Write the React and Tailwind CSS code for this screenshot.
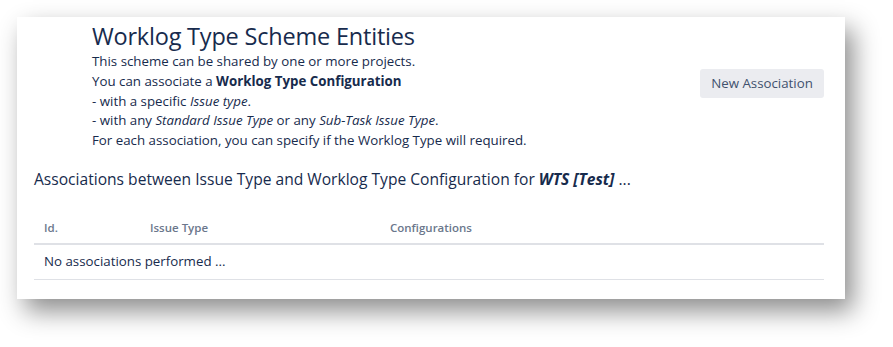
const font = { fontFamily: '"Open Sans", "Noto Sans", sans-serif' };

const App = () => {
  return (
    <div className="w-[893px] h-[347px] bg-white pl-[17px] pt-[17px] overflow-hidden" style={font}>
      <div className="w-[828px] h-[282px] bg-white shadow-[8px_12px_24px_rgba(0,0,0,0.45)] pl-[17px] pr-[21px] pt-[4px] text-[#172b4d]">
        <div className="flex items-start justify-between">
          <div className="pl-[58px]">
            <h1 className="text-[23.5px] leading-[30px] font-medium tracking-[-0.2px]">Worklog Type Scheme Entities</h1>
            <div className="mt-[1px] text-[13.3px] leading-[19.75px]">
              <p>This scheme can be shared by one or more projects.</p>
              <p>
                You can associate a <b>Worklog Type Configuration</b>
              </p>
              <p>
                - with a specific <i>Issue type</i>.
              </p>
              <p>
                - with any <i>Standard Issue Type</i> or any <i>Sub-Task Issue Type</i>.
              </p>
              <p>For each association, you can specify if the Worklog Type will required.</p>
            </div>
          </div>
          <button className="mt-[48px] h-[29px] w-[124px] rounded-[3px] bg-[#ebecf0] text-[13.3px] text-[#42526e]">
            New Association
          </button>
        </div>

        <h2 className="mt-[18px] text-[15.6px] leading-[20px] font-medium">
          Associations between Issue Type and Worklog Type Configuration for <b><i>WTS [Test]</i></b> ...
        </h2>

        <table className="mt-[23px] w-full text-left">
          <thead>
            <tr className="border-b-2 border-[#dfe1e6] text-[11.5px] font-semibold text-[#6b778c]">
              <th className="h-[32px] w-[116px] pl-[10px] font-semibold">Id.</th>
              <th className="w-[240px] font-semibold">Issue Type</th>
              <th className="font-semibold">Configurations</th>
            </tr>
          </thead>
          <tbody>
            <tr className="border-b border-[#dfe1e6] text-[13.3px]">
              <td colSpan={3} className="h-[36px] pl-[10px]">No associations performed ...</td>
            </tr>
          </tbody>
        </table>
      </div>
    </div>
  );
};

export default App;
